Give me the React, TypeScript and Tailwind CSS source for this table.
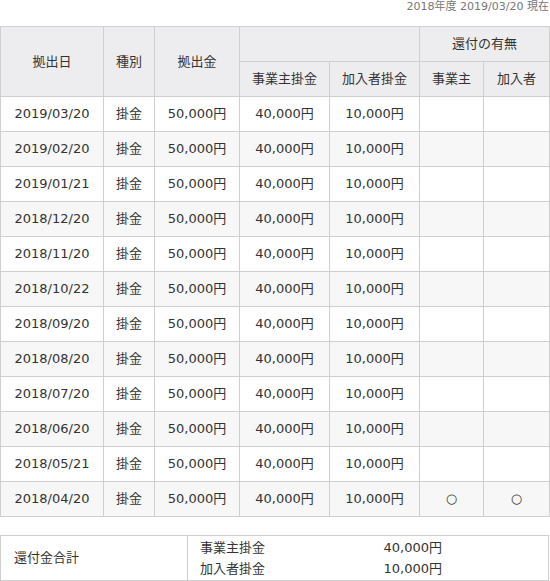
const rows = [
  { date: "2019/03/20", ret: false },
  { date: "2019/02/20", ret: false },
  { date: "2019/01/21", ret: false },
  { date: "2018/12/20", ret: false },
  { date: "2018/11/20", ret: false },
  { date: "2018/10/22", ret: false },
  { date: "2018/09/20", ret: false },
  { date: "2018/08/20", ret: false },
  { date: "2018/07/20", ret: false },
  { date: "2018/06/20", ret: false },
  { date: "2018/05/21", ret: false },
  { date: "2018/04/20", ret: true },
];

const th = "border border-[#cfcfcf] bg-[#ededef] font-normal text-center h-[35px] p-0";
const td = "border border-[#cfcfcf] text-center h-[35px] p-0";

export default function App() {
  return (
    <div className="w-[550px] min-h-[581px] bg-white text-[#333] text-[13px] font-['DejaVu_Sans','Noto_Sans_CJK_JP',sans-serif]">
      {/* 基準日 */}
      <div className="w-[549px] text-right text-[11px] leading-[13px] text-[#777] h-[26px]">
        2018年度 2019/03/20 現在
      </div>

      {/* 拠出履歴 */}
      <table className="table-fixed border-collapse w-[549px]">
        <colgroup>
          <col className="w-[103px]" />
          <col className="w-[51px]" />
          <col className="w-[85px]" />
          <col className="w-[90px]" />
          <col className="w-[90px]" />
          <col className="w-[64px]" />
          <col className="w-[66px]" />
        </colgroup>
        <thead>
          <tr>
            <th rowSpan={2} className={th}>拠出日</th>
            <th rowSpan={2} className={th}>種別</th>
            <th rowSpan={2} className={th}>拠出金</th>
            <th colSpan={2} className={th}></th>
            <th colSpan={2} className={th}>還付の有無</th>
          </tr>
          <tr>
            <th className={th}>事業主掛金</th>
            <th className={th}>加入者掛金</th>
            <th className={th}>事業主</th>
            <th className={th}>加入者</th>
          </tr>
        </thead>
        <tbody>
          {rows.map((r, i) => (
            <tr key={r.date} className={i % 2 === 1 ? "bg-[#f7f7f7]" : "bg-white"}>
              <td className={td}>{r.date}</td>
              <td className={td}>掛金</td>
              <td className={td}>50,000円</td>
              <td className={td}>40,000円</td>
              <td className={td}>10,000円</td>
              <td className={td}>{r.ret ? "○" : ""}</td>
              <td className={td}>{r.ret ? "○" : ""}</td>
            </tr>
          ))}
        </tbody>
      </table>

      {/* 還付金合計 */}
      <table className="table-fixed border-collapse w-[549px] mt-[18px]">
        <colgroup>
          <col className="w-[187px]" />
          <col />
        </colgroup>
        <tbody>
          <tr>
            <td className="border border-[#cfcfcf] pl-[13px] py-0">還付金合計</td>
            <td className="border border-[#cfcfcf] pl-[12px] py-px">
              <div className="flex leading-[21px]">
                <span className="w-[130px]">事業主掛金</span>
                <span className="w-[112px] text-right">40,000円</span>
              </div>
              <div className="flex leading-[21px]">
                <span className="w-[130px]">加入者掛金</span>
                <span className="w-[112px] text-right">10,000円</span>
              </div>
            </td>
          </tr>
        </tbody>
      </table>
    </div>
  );
}
